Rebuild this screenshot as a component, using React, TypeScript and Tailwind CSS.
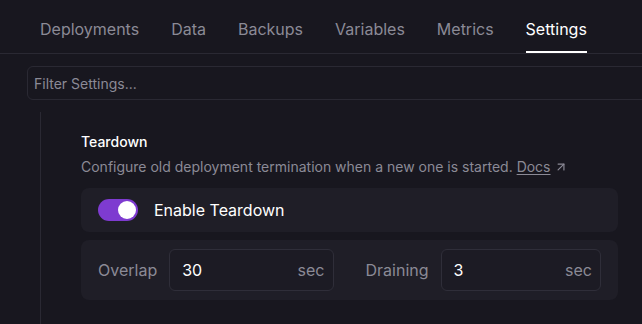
import React, { useState } from 'react';
import { ArrowUpRight } from 'lucide-react';

const tabs = ['Deployments', 'Data', 'Backups', 'Variables', 'Metrics', 'Settings'];

const Toggle: React.FC<{ on: boolean; onChange: () => void }> = ({ on, onChange }) => (
  <button
    onClick={onChange}
    className={`w-[40px] h-[22px] rounded-full flex items-center px-[2px] ${on ? 'bg-[#7e3bd0] justify-end' : 'bg-[#3a3945] justify-start'}`}
  >
    <span className="w-[18px] h-[18px] rounded-full bg-white" />
  </button>
);

const SecInput: React.FC<{ label: string; value: string }> = ({ label, value }) => (
  <div className="flex-1 flex items-center gap-3">
    <span className="text-[#8b8a96]">{label}</span>
    <div className="flex-1 h-[42px] rounded-md border border-[#2f2e39] bg-[#1c1b24] flex items-center px-3">
      <span className="flex-1 text-white">{value}</span>
      <span className="text-[#8b8a96] -mr-1">sec</span>
    </div>
  </div>
);

export default function App() {
  const [active] = useState('Settings');
  const [teardown, setTeardown] = useState(true);

  return (
    <div
      className="w-[642px] h-[324px] overflow-hidden bg-[#18171f] text-white"
      style={{ fontFamily: 'Inter, "Noto Sans", sans-serif' }}
    >
      {/* Tabs */}
      <div className="h-[54px] border-b border-[#2a2933] flex items-end gap-8 pl-[40px]">
        {tabs.map(t => (
          <div
            key={t}
            className={`pb-[10px] text-[16px] leading-6 border-b-2 ${t === active ? 'text-white border-white' : 'text-[#8b8a96] border-transparent'}`}
          >
            {t}
          </div>
        ))}
      </div>

      {/* Filter */}
      <div className="pt-3 pl-[27px]">
        <div className="w-[640px] h-[34px] rounded-md border border-[#2a2933] flex items-center px-[6px] text-[14px] text-[#8b8a96]">
          Filter Settings...
        </div>
      </div>

      {/* Content */}
      <div className="flex mt-[12px] pl-[40px]">
        <div className="w-px bg-[#2a2933] h-[220px]" />
        <div className="pl-[40px] pt-[20px] w-[577px]">
          <div className="text-[14px] font-medium leading-5 text-white">Teardown</div>
          <div className="mt-[5px] text-[14px] leading-5 text-[#8b8a96] flex items-center">
            Configure old deployment termination when a new one is started.&nbsp;
            <span className="underline underline-offset-2">Docs</span>
            <ArrowUpRight size={14} className="ml-[3px]" />
          </div>

          <div className="mt-[11px] h-[44px] rounded-lg bg-[#1f1e27] flex items-center px-[17px] gap-4">
            <Toggle on={teardown} onChange={() => setTeardown(!teardown)} />
            <span className="text-[16px]">Enable Teardown</span>
          </div>

          <div className="mt-2 h-[60px] rounded-lg bg-[#1f1e27] flex items-center px-[17px] gap-8 text-[16px]">
            <SecInput label="Overlap" value="30" />
            <SecInput label="Draining" value="3" />
          </div>
        </div>
      </div>
    </div>
  );
}
